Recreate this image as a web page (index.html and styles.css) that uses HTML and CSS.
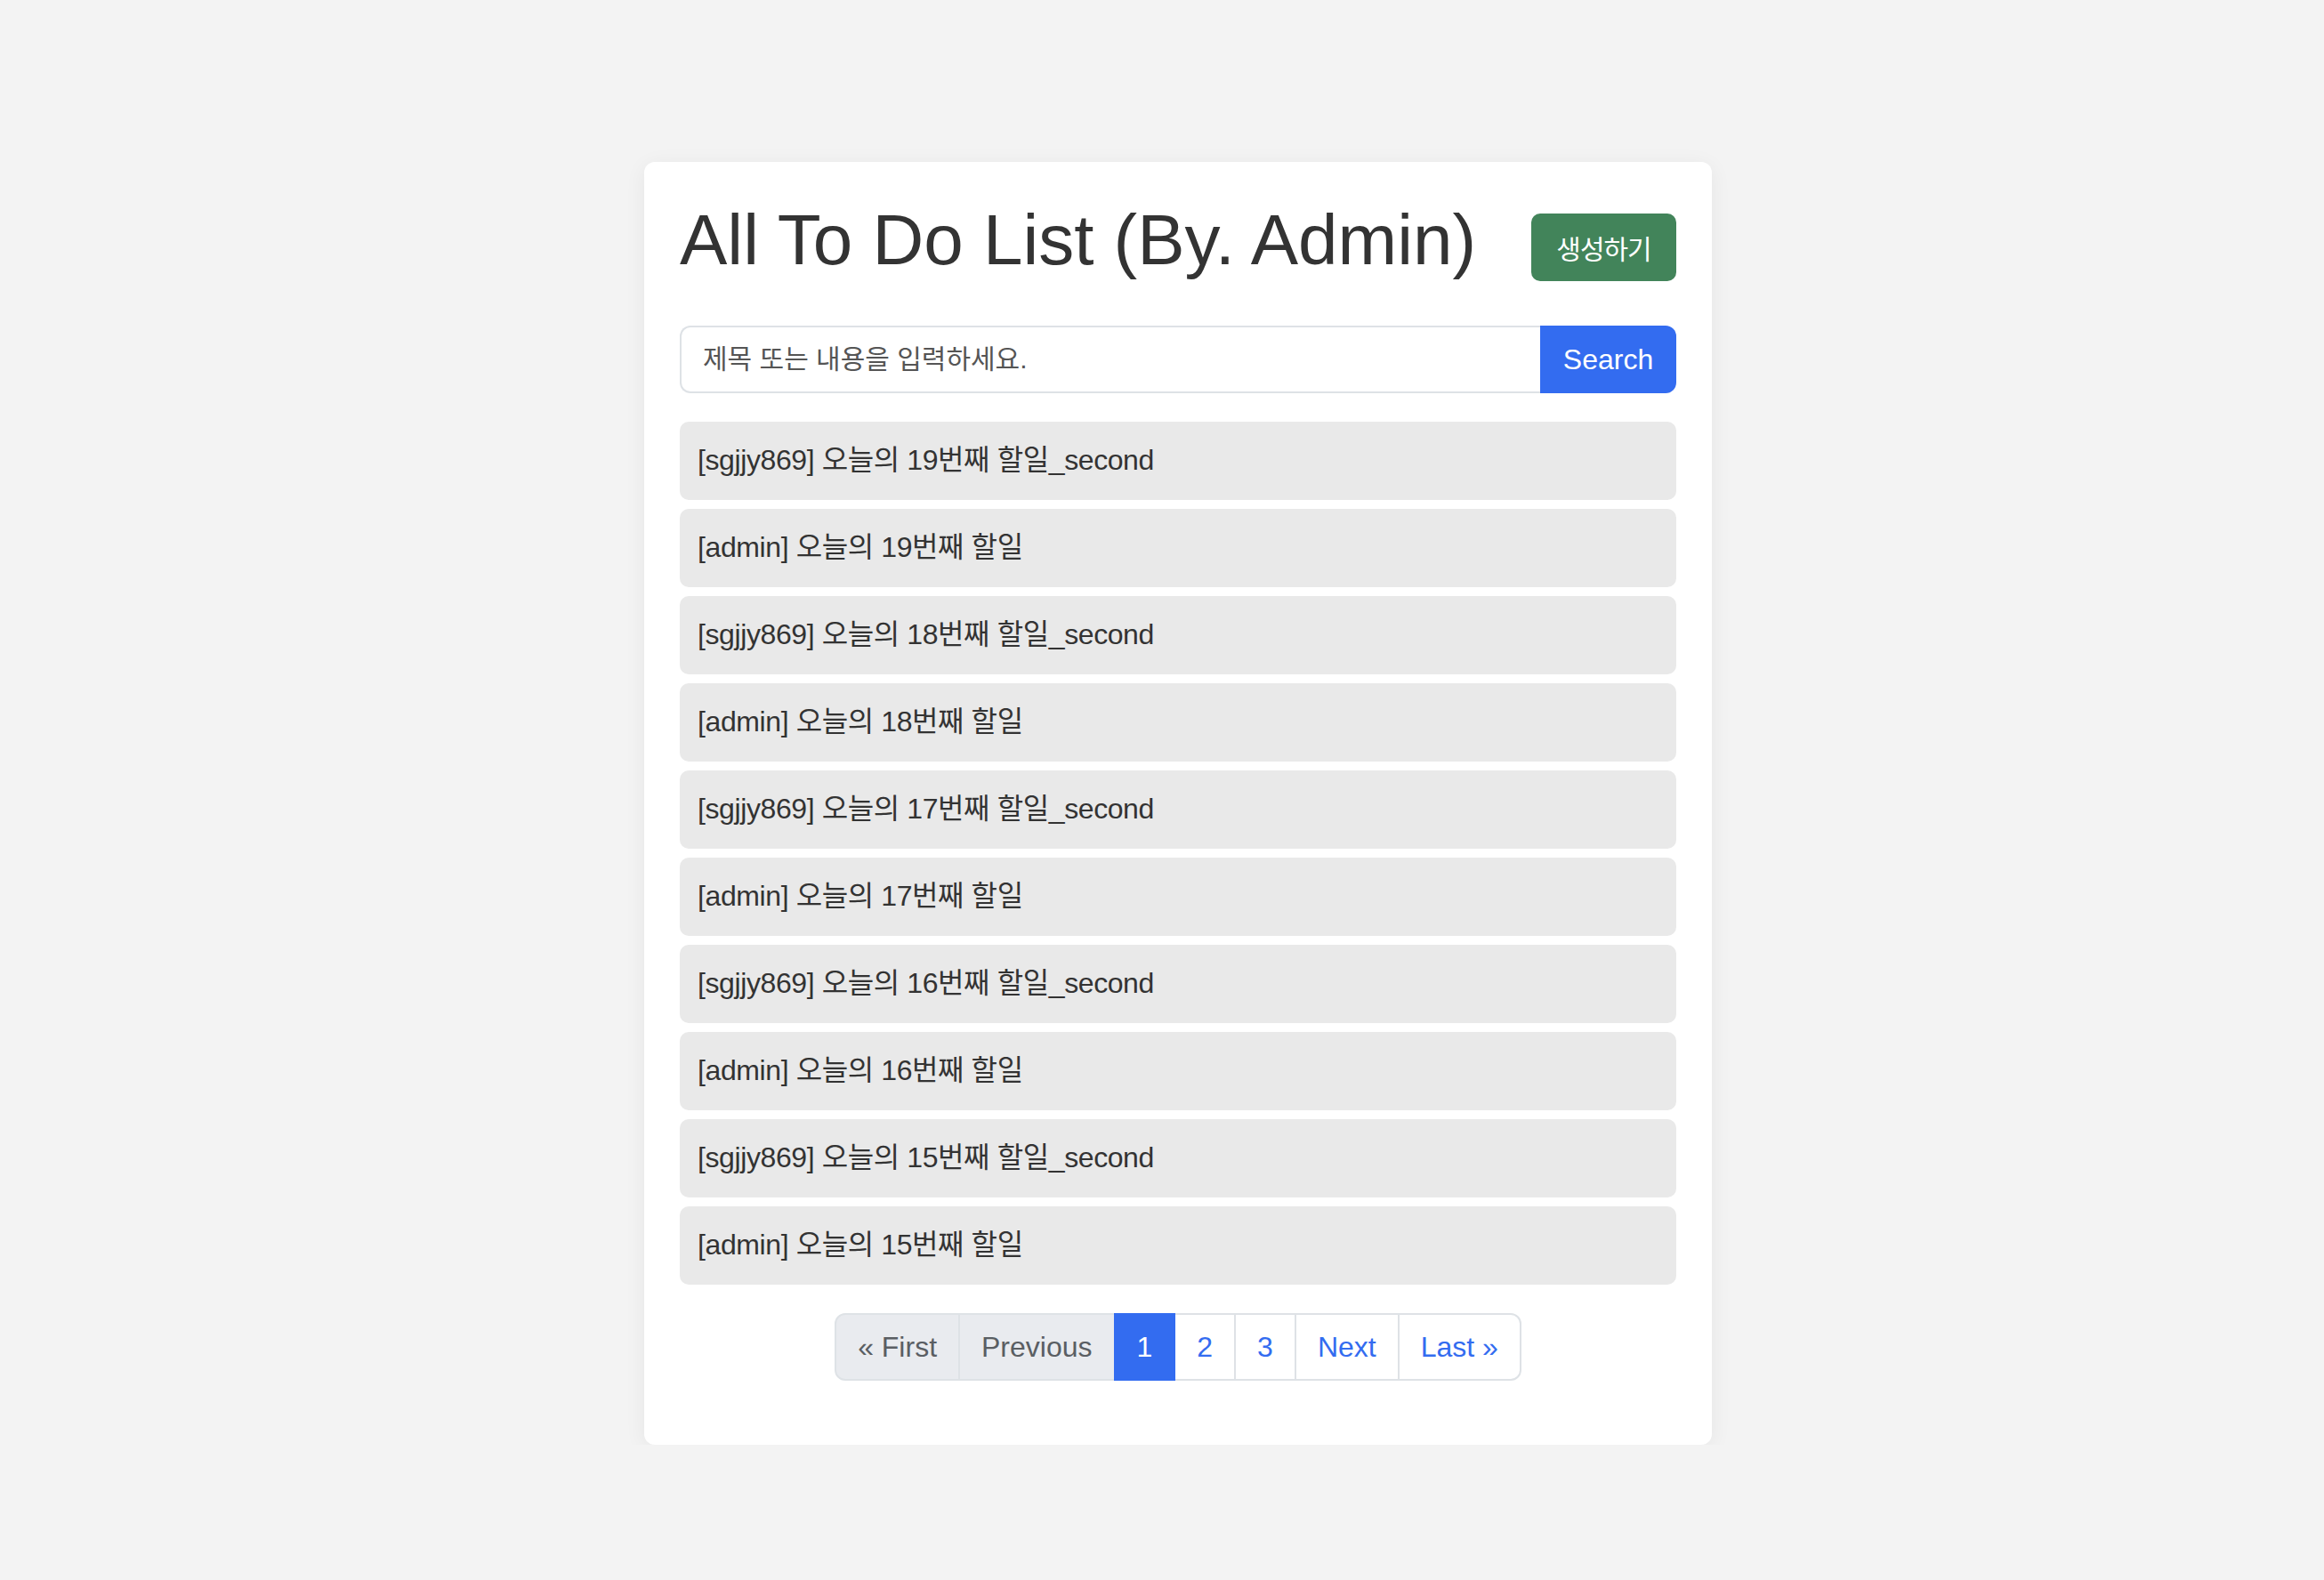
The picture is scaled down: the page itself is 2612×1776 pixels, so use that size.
FILE: index.html
```html
<!DOCTYPE html>
<html lang="ko">
<head>
<meta charset="utf-8">
<title>All To Do List</title>
<link rel="stylesheet" href="styles.css">
</head>
<body>
<div class="page">
  <main class="card">
    <div class="header">
      <h1 class="title">All To Do List (By. Admin)</h1>
      <button class="btn-create" type="button">생성하기</button>
    </div>
    <form class="search">
      <input class="search-input" type="text" placeholder="제목 또는 내용을 입력하세요.">
      <button class="search-btn" type="button">Search</button>
    </form>
    <ul class="todo-list">
      <li class="todo-item">[sgjjy869] 오늘의 19번째 할일_second</li>
      <li class="todo-item">[admin] 오늘의 19번째 할일</li>
      <li class="todo-item">[sgjjy869] 오늘의 18번째 할일_second</li>
      <li class="todo-item">[admin] 오늘의 18번째 할일</li>
      <li class="todo-item">[sgjjy869] 오늘의 17번째 할일_second</li>
      <li class="todo-item">[admin] 오늘의 17번째 할일</li>
      <li class="todo-item">[sgjjy869] 오늘의 16번째 할일_second</li>
      <li class="todo-item">[admin] 오늘의 16번째 할일</li>
      <li class="todo-item">[sgjjy869] 오늘의 15번째 할일_second</li>
      <li class="todo-item">[admin] 오늘의 15번째 할일</li>
    </ul>
    <nav class="pager">
      <span class="page-link disabled first">« First</span>
      <span class="page-link disabled">Previous</span>
      <span class="page-link active">1</span>
      <span class="page-link">2</span>
      <span class="page-link">3</span>
      <span class="page-link">Next</span>
      <span class="page-link last">Last »</span>
    </nav>
  </main>
</div>
</body>
</html>
```
FILE: styles.css
```css
html, body {
  margin: 0;
  padding: 0;
}
body {
  background: #f3f3f3;
  font-family: "Liberation Sans", "Noto Sans CJK KR", Arial, sans-serif;
  color: #333333;
}
.page {
  display: flex;
  justify-content: center;
  padding: 182px 0 0 36px;
}
.card {
  box-sizing: border-box;
  width: 1200px;
  padding: 40px;
  background: #ffffff;
  border-radius: 12px;
  box-shadow: 0 4px 24px rgba(0, 0, 0, 0.06);
}
.header {
  display: flex;
  justify-content: space-between;
  align-items: flex-start;
}
.title {
  margin: 0;
  font-size: 80px;
  font-weight: 400;
  line-height: 96px;
  color: #333333;
}
.btn-create {
  margin-top: 18px;
  height: 76px;
  width: 163px;
  padding: 0;
  border: none;
  border-radius: 10px;
  background: #42845a;
  color: #ffffff;
  font-family: "Liberation Sans", "Noto Sans CJK KR", sans-serif;
  font-size: 30px;
  letter-spacing: -1px;
}
.search {
  display: flex;
  margin: 48px 0 0;
  height: 76px;
}
.search-input {
  flex: 1;
  box-sizing: border-box;
  height: 76px;
  margin: 0;
  padding: 0 24px;
  border: 2px solid #dee2e6;
  border-right: none;
  border-radius: 12px 0 0 12px;
  font-family: "Liberation Sans", "Noto Sans CJK KR", sans-serif;
  font-size: 30px;
  color: #333333;
  outline: none;
}
.search-input::placeholder {
  color: #555555;
}
.search-btn {
  width: 153px;
  height: 76px;
  margin: 0;
  padding: 0;
  border: none;
  border-radius: 0 12px 12px 0;
  background: #336cf0;
  color: #ffffff;
  font-family: "Liberation Sans", sans-serif;
  font-size: 32px;
}
.todo-list {
  list-style: none;
  margin: 32px 0 0;
  padding: 0;
  display: flex;
  flex-direction: column;
  gap: 10px;
}
.todo-item {
  height: 88px;
  box-sizing: border-box;
  padding: 0 20px 3px;
  display: flex;
  align-items: center;
  line-height: 48px;
  background: #e9e9e9;
  border-radius: 10px;
  font-size: 32px;
  color: #333333;
  letter-spacing: -0.4px;
}
.pager {
  display: flex;
  justify-content: center;
  margin: 32px 0 32px;
}
.page-link {
  box-sizing: border-box;
  height: 76px;
  display: flex;
  align-items: center;
  padding: 0 24px;
  margin-left: -2px;
  border: 2px solid #dee2e6;
  background: #ffffff;
  color: #336cf0;
  font-size: 32px;
}
.page-link.disabled {
  background: #e9ebef;
  color: #5a5e63;
}
.page-link.active {
  background: #336cf0;
  border-color: #336cf0;
  color: #ffffff;
  position: relative;
}
.page-link.first {
  margin-left: 0;
  border-radius: 12px 0 0 12px;
}
.page-link.last {
  border-radius: 0 12px 12px 0;
}
```
